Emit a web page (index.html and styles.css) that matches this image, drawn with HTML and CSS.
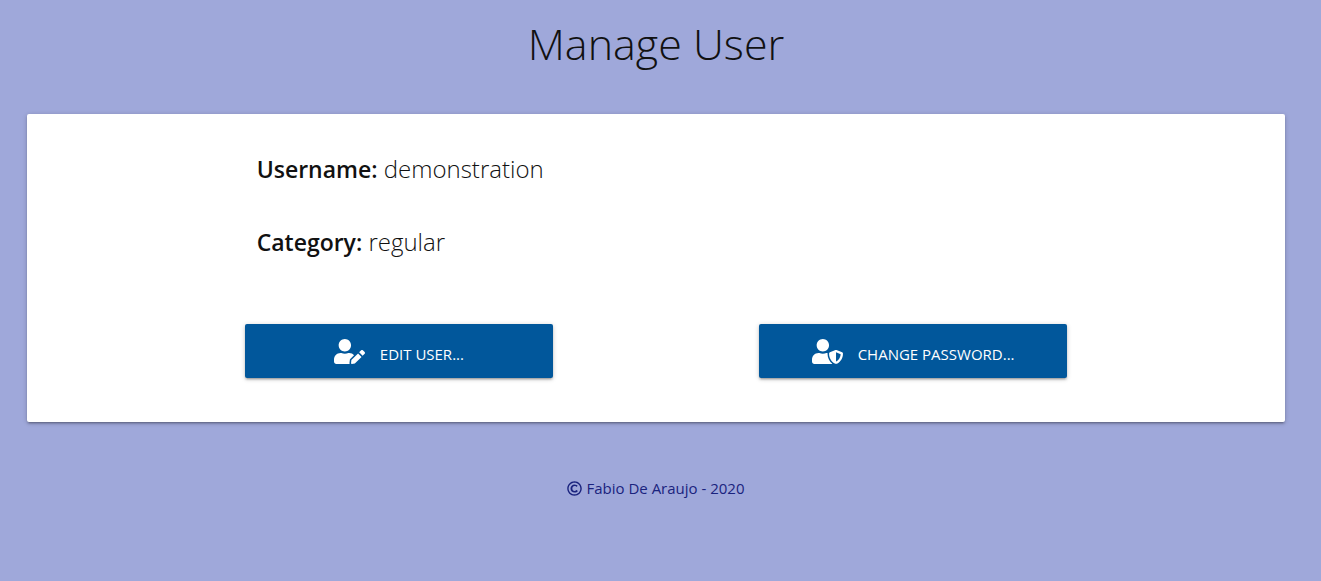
FILE: index.html
```html
<!DOCTYPE html>
<html lang="en">
<head>
<meta charset="utf-8">
<title>Manage User</title>
<meta name="viewport" content="width=device-width, initial-scale=1">
<link rel="stylesheet" href="styles.css">
</head>
<body>
<h1 class="page-title">Manage User</h1>
<main class="card">
  <div class="details">
    <p class="detail"><strong class="detail-label">Username:</strong> demonstration</p>
    <p class="detail"><strong class="detail-label">Category:</strong> regular</p>
  </div>
  <div class="actions">
    <button class="btn" type="button">
      <svg class="btn-icon" viewBox="0 0 640 512" aria-hidden="true"><path d="M224 256c70.7 0 128-57.3 128-128S294.7 0 224 0 96 57.3 96 128s57.3 128 128 128zm89.6 32h-16.7c-22.2 10.2-46.9 16-72.9 16s-50.6-5.8-72.9-16h-16.7C60.2 288 0 348.2 0 422.4V464c0 26.5 21.5 48 48 48h274.9c-2.4-6.8-3.4-14-2.6-21.3l6.8-60.9 1.2-11.1 7.9-7.9 77.3-77.3c-24.5-27.7-60-45.5-99.9-45.5zm45.3 145.3l-6.8 61c-1.1 10.2 7.5 18.8 17.6 17.6l60.9-6.8 137.9-137.9-71.7-71.7-137.9 137.8zM633 268.9L595.1 231c-9.3-9.3-24.5-9.3-33.8 0l-37.8 37.8-4.1 4.1 71.8 71.7 41.8-41.8c9.3-9.4 9.3-24.5 0-33.9z"/></svg>
      <span class="btn-label">Edit User...</span>
    </button>
    <button class="btn" type="button">
      <svg class="btn-icon" viewBox="0 0 640 512" aria-hidden="true"><path d="M622.3 271.1l-115.2-45c-4.1-1.6-12.6-3.7-22.2 0l-115.2 45c-10.7 4.2-17.7 14-17.7 24.9 0 111.6 68.7 188.8 132.9 213.9 9.6 3.7 18 1.6 22.2 0C558.4 489.9 640 420.5 640 296c0-10.9-7-20.7-17.7-24.9zM496 462.4V273.3l95.5 37.3c-5.6 87.1-60.9 135.4-95.5 151.8zM224 256c70.7 0 128-57.3 128-128S294.7 0 224 0 96 57.3 96 128s57.3 128 128 128zm96 40c0-2.5.8-4.8 1.1-7.2-2.5-.1-4.9-.8-7.5-.8h-16.7c-22.2 10.2-46.9 16-72.9 16s-50.6-5.8-72.9-16h-16.7C60.2 288 0 348.2 0 422.4V464c0 26.5 21.5 48 48 48h352c6.8 0 13.3-1.5 19.2-4-54-42.9-99.2-116.7-99.2-212z"/></svg>
      <span class="btn-label">Change Password...</span>
    </button>
  </div>
</main>
<footer class="footer">
  <svg class="footer-icon" viewBox="0 0 512 512" role="img" aria-label="Copyright"><path d="M256 8C119.033 8 8 119.033 8 256s111.033 248 248 248 248-111.033 248-248S392.967 8 256 8zm0 448c-110.532 0-200-89.451-200-200 0-110.531 89.451-200 200-200 110.532 0 200 89.451 200 200 0 110.532-89.451 200-200 200zm107.351-101.064c-9.614 9.712-45.53 41.396-104.065 41.396-82.43 0-140.484-61.425-140.484-141.567 0-79.152 60.275-139.401 139.762-139.401 55.531 0 88.738 26.62 97.593 34.779a11.965 11.965 0 0 1 1.936 15.322l-18.155 28.113c-3.841 5.95-11.966 7.282-17.499 2.921-8.595-6.776-31.814-22.538-61.708-22.538-48.303 0-77.916 35.33-77.916 80.082 0 41.589 26.888 83.692 78.277 83.692 32.657 0 56.843-19.039 65.726-27.225 5.27-4.857 13.596-4.039 17.82 1.738l19.865 27.17a11.947 11.947 0 0 1-1.152 15.518z"/></svg>
  <span>Fabio De Araujo - 2020</span>
</footer>
</body>
</html>
```
FILE: styles.css
```css
* {
  box-sizing: border-box;
}

body {
  margin: 0;
  padding: 15px 36px 16px 27px;
  background: #9fa8da;
  color: rgba(0, 0, 0, 0.87);
  font-family: "Open Sans", "Noto Sans", sans-serif;
}

.page-title {
  margin: 0 0 41px;
  color: #111;
  font-size: 43px;
  font-weight: 300;
  line-height: 58px;
  text-align: center;
}

.card {
  padding: 35px 17.3% 44px;
  background: #fff;
  border-radius: 2px;
  box-shadow: 0 2px 2px 0 rgba(0, 0, 0, 0.14), 0 3px 1px -2px rgba(0, 0, 0, 0.12), 0 1px 5px 0 rgba(0, 0, 0, 0.2);
}

.details {
  display: grid;
  gap: 33px;
  padding: 0 12px;
}

.detail {
  margin: 0;
  color: #111;
  font-size: 24px;
  font-weight: 300;
  line-height: 40px;
}

.detail-label {
  font-size: 23px;
  font-weight: 600;
}

.actions {
  display: grid;
  grid-template-columns: 1fr 1fr;
  gap: 25%;
  margin-top: 62px;
}

.btn {
  display: flex;
  align-items: center;
  justify-content: center;
  gap: 15px;
  height: 54px;
  padding: 0 16px;
  border: 0;
  border-radius: 2px;
  background: #01579b;
  color: #fff;
  font-family: inherit;
  font-size: 15px;
  text-transform: uppercase;
  cursor: pointer;
  box-shadow: 0 2px 2px 0 rgba(0, 0, 0, 0.14), 0 3px 1px -2px rgba(0, 0, 0, 0.12), 0 1px 5px 0 rgba(0, 0, 0, 0.2);
}

.btn-icon {
  flex: none;
  width: 31px;
  height: 25px;
  fill: currentColor;
}

.btn-label {
  padding-top: 6px;
}

.footer {
  display: flex;
  align-items: center;
  justify-content: center;
  gap: 4px;
  margin-top: 55px;
  color: #1a237e;
  font-size: 15px;
  line-height: 22px;
}

.footer-icon {
  width: 15px;
  height: 15px;
  fill: currentColor;
}
```
